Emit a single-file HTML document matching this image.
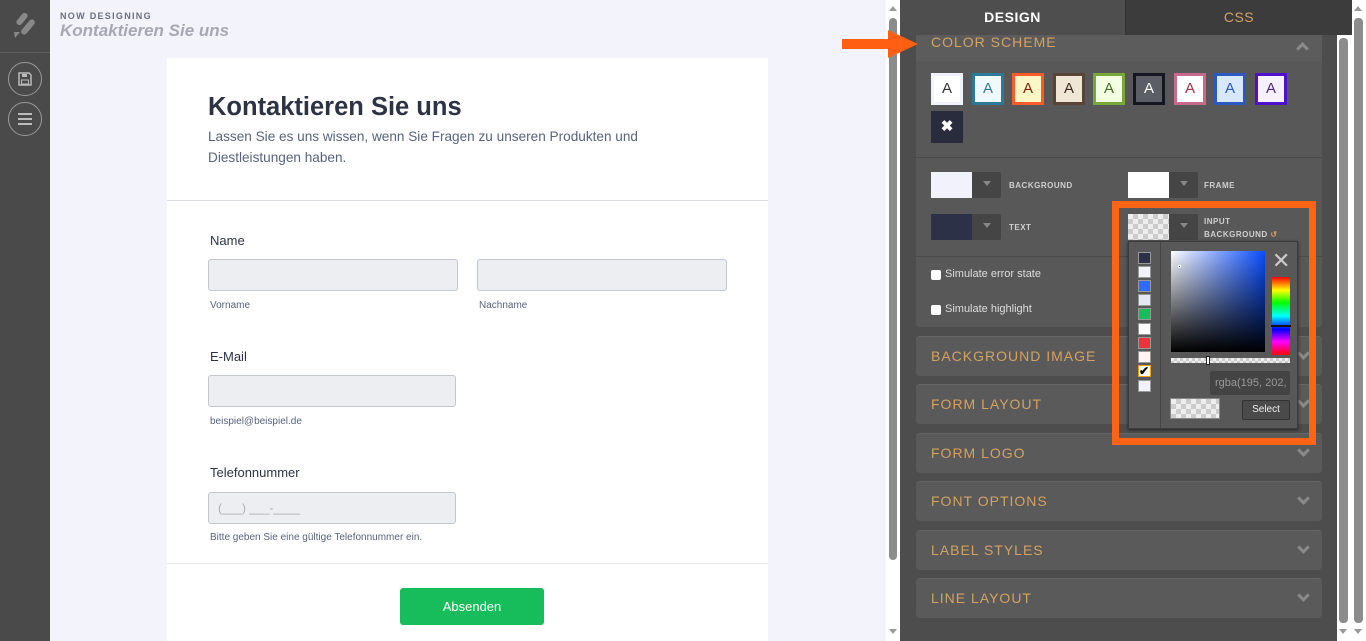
<!DOCTYPE html>
<html><head><meta charset="utf-8"><style>
*{box-sizing:border-box;margin:0;padding:0}
body{width:1366px;height:641px;overflow:hidden;position:relative;font-family:"Liberation Sans",sans-serif;background:#f3f3fc}
.a{position:absolute}
.sb{left:0;top:0;width:50px;height:641px;background:#4a4a4a}
.circ{width:34px;height:34px;border:1px solid #9a9a9a;border-radius:50%;left:8px}
.card{left:167px;top:58px;width:601px;height:583px;background:#fff}
.lbl{font-size:13px;color:#2c3345}
.inp{background:#edeef2;border:1px solid #c3c7d0;border-radius:3px;height:32px}
.sub{font-size:10px;color:#57647e}
.rp{left:900px;top:0;width:452px;height:641px;background:#4d4d4d}
.sec{left:916px;width:406px;height:40px;background:#5a5a5a;border-radius:4px;border-top:1px solid #666}
.sec span{position:absolute;left:15px;top:11px;font-size:14px;letter-spacing:1px;color:#d3a262}
.chev{position:absolute;right:14px;top:12px;width:9px;height:9px;border-right:3px solid #8a8a8a;border-bottom:3px solid #8a8a8a;transform:rotate(45deg)}
.sw{width:32px;height:32px;border:3px solid;font-size:15px;text-align:center;line-height:26px;top:73px}
.cbox{height:26px;width:70px;background:#454545;border-radius:2px}
.cbox i{position:absolute;left:0;top:0;width:41px;height:26px}
.cbox b{position:absolute;right:10px;top:9px;border:4px solid transparent;border-top:5px solid #888;border-bottom:0}
.cl{font-size:8px;color:#cfcfcf;font-weight:bold;letter-spacing:.5px}
.chk{background:repeating-conic-gradient(#ccc 0 25%,#eee 0 50%) 0 0/10px 10px}
.ps{left:1138px;width:13px;height:12px;border:1px solid #999}
</style></head><body>
<div class="a sb"></div>
<div class="a" style="left:0;top:52px;width:50px;height:1px;background:#5c5c5c"></div>
<svg class="a" style="left:13px;top:13px" width="24" height="26" viewBox="0 0 24 26"><g fill="#888"><rect x="6" y="-1" width="6" height="14" rx="3" transform="rotate(40 9 6)"/><rect x="12" y="5" width="6" height="18" rx="3" transform="rotate(40 15 14)"/><path d="M1 19h6l-5 6z"/></g></svg>
<div class="a circ" style="top:62px"></div>
<svg class="a" style="left:18px;top:72px" width="14" height="14" viewBox="0 0 14 14"><path d="M1 1h10l2 2v10H1z" fill="none" stroke="#bbb" stroke-width="1.5"/><rect x="4" y="2" width="5" height="3" fill="#bbb"/><rect x="3.5" y="8" width="7" height="4" fill="none" stroke="#bbb"/></svg>
<div class="a circ" style="top:102px"></div>
<div class="a" style="left:18px;top:113px;width:14px;height:2px;background:#bbb;box-shadow:0 5px #bbb,0 10px #bbb"></div>

<div class="a" style="left:60px;top:11px;font-size:9px;letter-spacing:1.3px;color:#6a6f7e;font-weight:bold">NOW DESIGNING</div>
<div class="a" style="left:60px;top:21px;font-size:17px;font-style:italic;font-weight:bold;color:#a6a8b3">Kontaktieren Sie uns</div>

<div class="a card"></div>
<div class="a" style="left:208px;top:93px;font-size:25.5px;color:#2c3345;font-weight:bold">Kontaktieren Sie uns</div>
<div class="a" style="left:208px;top:126px;width:470px;font-size:13.6px;line-height:21px;color:#57647e">Lassen Sie es uns wissen, wenn Sie Fragen zu unseren Produkten und Diestleistungen haben.</div>
<div class="a" style="left:167px;top:200px;width:601px;height:1px;background:#d8dae6"></div>
<div class="a lbl" style="left:210px;top:233px">Name</div>
<div class="a inp" style="left:208px;top:259px;width:250px"></div>
<div class="a inp" style="left:477px;top:259px;width:250px"></div>
<div class="a sub" style="left:210px;top:300px">Vorname</div>
<div class="a sub" style="left:479px;top:300px">Nachname</div>
<div class="a lbl" style="left:210px;top:349px">E-Mail</div>
<div class="a inp" style="left:208px;top:375px;width:248px"></div>
<div class="a sub" style="left:210px;top:416px">beispiel@beispiel.de</div>
<div class="a lbl" style="left:210px;top:465px">Telefonnummer</div>
<div class="a inp" style="left:208px;top:492px;width:248px"><span style="position:absolute;left:9px;top:8px;font-size:12px;color:#aaa">(___) ___-____</span></div>
<div class="a sub" style="left:210px;top:532px">Bitte geben Sie eine gültige Telefonnummer ein.</div>
<div class="a" style="left:167px;top:563px;width:601px;height:1px;background:#e3e4ec"></div>
<div class="a" style="left:400px;top:588px;width:144px;height:37px;background:#18bd5b;border-radius:3px;color:#fff;font-size:13px;text-align:center;line-height:37px">Absenden</div>

<div class="a" style="left:886px;top:0;width:14px;height:641px;background:#fff"></div>
<div class="a" style="left:889px;top:18px;width:8px;height:542px;background:#8c8c8c;border-radius:4px"></div>
<div class="a" style="left:889px;top:6px;border:4px solid transparent;border-bottom:5px solid #999;border-top:0"></div>
<div class="a" style="left:889px;top:629px;border:4px solid transparent;border-top:5px solid #999;border-bottom:0"></div>

<div class="a rp"></div>
<div class="a" style="left:900px;top:0;width:225px;height:35px;background:#4e4e4e;color:#fff;font-weight:bold;font-size:14px;text-align:center;line-height:35px;letter-spacing:.5px">DESIGN</div>
<div class="a" style="left:1125px;top:0;width:227px;height:35px;background:#3c3c3c;color:#d3a262;font-size:14px;text-align:center;line-height:35px;letter-spacing:.5px;border-left:1px solid #333">CSS</div>

<div class="a" style="left:916px;top:35px;width:406px;height:292px;background:#585858;border-radius:0 0 4px 4px"></div>
<div class="a" style="left:916px;top:35px;width:406px;height:26px;background:#5c5c5c"></div>
<div class="a" style="left:931px;top:34px;font-size:14px;letter-spacing:1px;color:#d3a262">COLOR SCHEME</div>
<div class="a" style="left:1298px;top:44px;width:9px;height:9px;border-left:3px solid #8a8a8a;border-top:3px solid #8a8a8a;transform:rotate(45deg)"></div>
<svg class="a" style="left:840px;top:28px" width="80" height="32"><path d="M2 11h46V2l30 14-30 14V21H2z" fill="#ff5f12"/></svg>
<div class="a" style="left:916px;top:157px;width:406px;height:1px;background:#4a4a4a"></div>
<div class="a sw" style="left:931px;border-color:#f1f2fc;background:#fff;color:#333">A</div>
<div class="a sw" style="left:972px;border-color:#2c7a98;background:#f0f9ff;color:#2c7a98">A</div>
<div class="a sw" style="left:1012px;border-color:#fb5d2a;background:#fff6c6;color:#7a2010">A</div>
<div class="a sw" style="left:1053px;border-color:#5a4438;background:#efe6d6;color:#3a2a20">A</div>
<div class="a sw" style="left:1093px;border-color:#76a83a;background:#f2ffe0;color:#4a6a2a">A</div>
<div class="a sw" style="left:1133px;border-color:#141622;background:#5c5e66;color:#fff">A</div>
<div class="a sw" style="left:1174px;border-color:#c56a8c;background:#fff;color:#a0304a">A</div>
<div class="a sw" style="left:1214px;border-color:#2a5ac0;background:#d8e8ff;color:#2a5ac0">A</div>
<div class="a sw" style="left:1255px;border-color:#5010d0;background:#f6f0ff;color:#502880">A</div>
<div class="a sw" style="left:931px;top:111px;border-color:#282c3c;background:#282c3c;color:#fff;font-weight:bold">✖</div>

<div class="a cbox" style="left:931px;top:172px"><i style="background:#f1f2fc"></i><b></b></div>
<div class="a cl" style="left:1009px;top:181px">BACKGROUND</div>
<div class="a cbox" style="left:1128px;top:172px"><i style="background:#fff"></i><b></b></div>
<div class="a cl" style="left:1204px;top:181px">FRAME</div>
<div class="a cbox" style="left:931px;top:214px"><i style="background:#2c3148"></i><b></b></div>
<div class="a cl" style="left:1009px;top:223px">TEXT</div>
<div class="a cbox" style="left:1128px;top:214px"><i class="chk"></i><b></b></div>
<div class="a cl" style="left:1204px;top:215px;line-height:13px">INPUT<br>BACKGROUND <span style="color:#d3a262">↺</span></div>
<div class="a" style="left:916px;top:256px;width:406px;height:1px;background:#4a4a4a"></div>
<div class="a" style="left:931px;top:270px;width:10px;height:10px;background:#fff;border-radius:2px"></div>
<div class="a" style="left:945px;top:268px;font-size:11px;color:#ddd">Simulate error state</div>
<div class="a" style="left:931px;top:305px;width:10px;height:10px;background:#fff;border-radius:2px"></div>
<div class="a" style="left:945px;top:303px;font-size:11px;color:#ddd">Simulate highlight</div>

<div class="a sec" style="top:336px"><span>BACKGROUND IMAGE</span><i class="chev"></i></div>
<div class="a sec" style="top:384px"><span>FORM LAYOUT</span><i class="chev"></i></div>
<div class="a sec" style="top:433px"><span>FORM LOGO</span><i class="chev"></i></div>
<div class="a sec" style="top:481px"><span>FONT OPTIONS</span><i class="chev"></i></div>
<div class="a sec" style="top:530px"><span>LABEL STYLES</span><i class="chev"></i></div>
<div class="a sec" style="top:578px"><span>LINE LAYOUT</span><i class="chev"></i></div>

<div class="a" style="left:1112px;top:201px;width:204px;height:244px;border:7px solid #ff6414"></div>
<div class="a" style="left:1128px;top:241px;width:170px;height:188px;background:#585858;border:1px solid #3c3c3c;box-shadow:0 1px 3px #222"></div>
<div class="a" style="left:1160px;top:242px;width:1px;height:186px;background:#444"></div>
<div class="a ps" style="top:252px;background:#2c3148"></div>
<div class="a ps" style="top:266px;background:#f1f2fc"></div>
<div class="a ps" style="top:280px;background:#2f6bff"></div>
<div class="a ps" style="top:294px;background:#e5e7f0"></div>
<div class="a ps" style="top:308px;background:#18bd5b"></div>
<div class="a ps" style="top:323px;background:#fff"></div>
<div class="a ps" style="top:337px;background:#f0323c"></div>
<div class="a ps" style="top:351px;background:#fff4f2"></div>
<div class="a ps" style="top:365px;background:#fff;border-color:#f5a000;font-size:12px;line-height:10px;font-weight:bold">✔</div>
<div class="a ps" style="top:380px;background:#f1f2fc"></div>
<div class="a" style="left:1171px;top:251px;width:94px;height:101px;background:linear-gradient(to bottom,transparent,#000),linear-gradient(to right,#fff,#0a4dff)"></div>
<div class="a" style="left:1178px;top:265px;width:3px;height:3px;background:#000;border:1px solid #fff;border-radius:50%"></div>
<div class="a" style="left:1272px;top:250px;width:18px;height:21px;color:#ccc;font-size:22px;line-height:21px;text-align:center">✕</div>
<div class="a" style="left:1272px;top:277px;width:18px;height:78px;background:linear-gradient(#f00,#ff0 17%,#0f0 33%,#0ff 50%,#00f 67%,#f0f 83%,#f00)"></div>
<div class="a" style="left:1271px;top:325px;width:20px;height:2px;background:#111"></div>
<div class="a chk" style="left:1171px;top:358px;width:119px;height:5px;background-size:6px 6px"></div>
<div class="a" style="left:1206px;top:356px;width:4px;height:9px;background:#fff;border:1px solid #222"></div>
<div class="a" style="left:1210px;top:371px;width:80px;height:24px;background:#444;border-radius:2px;color:#999;font-size:11px;line-height:24px;padding-left:5px;overflow:hidden;white-space:nowrap">rgba(195, 202,</div>
<div class="a chk" style="left:1170px;top:398px;width:50px;height:21px;border:1px solid #888"></div>
<div class="a" style="left:1242px;top:400px;width:48px;height:20px;background:#4a4a4a;border:1px solid #333;border-radius:2px;color:#eee;font-size:10px;text-align:center;line-height:18px">Select</div>

<div class="a" style="left:1337px;top:35px;width:15px;height:606px;background:#fff"></div>
<div class="a" style="left:1339px;top:38px;width:9px;height:585px;background:#8c8c8c;border-radius:4px"></div>
<div class="a" style="left:1352px;top:0;width:14px;height:641px;background:#fff"></div>
<div class="a" style="left:1354px;top:18px;width:9px;height:605px;background:#8c8c8c;border-radius:4px"></div>
<div class="a" style="left:1354px;top:6px;border:4px solid transparent;border-bottom:5px solid #999;border-top:0"></div>
<div class="a" style="left:1354px;top:629px;border:4px solid transparent;border-top:5px solid #999;border-bottom:0"></div>
<div class="a" style="left:1339px;top:629px;border:4px solid transparent;border-top:5px solid #999;border-bottom:0"></div>
</body></html>
